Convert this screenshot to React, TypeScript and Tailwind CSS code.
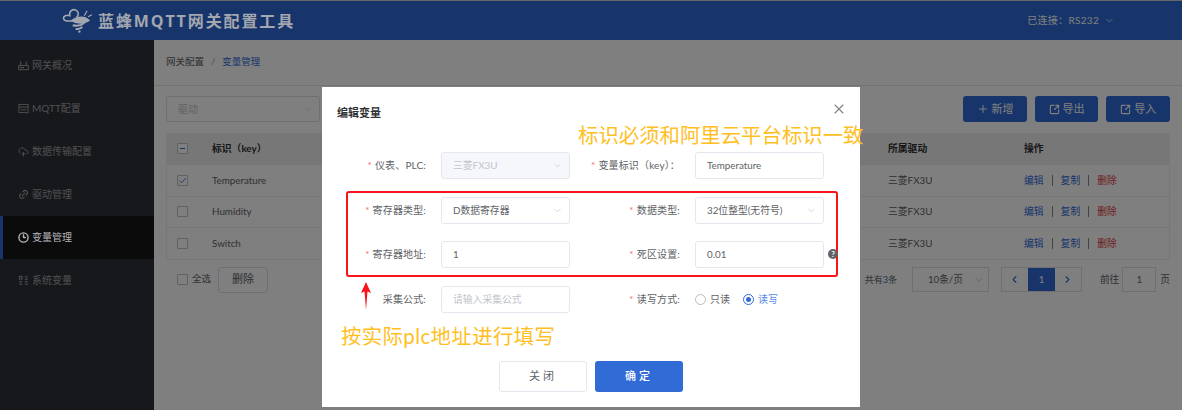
import React from "react";
import { ChevronDown, ChevronLeft, ChevronRight, Plus, X, SquareArrowOutUpRight, Clock3, CloudUpload, Link2 } from "lucide-react";

const rows = ["Temperature", "Humidity", "Switch"];

const navItems = [
  { label: "网关概况", icon: "router" },
  { label: "MQTT配置", icon: "list" },
  { label: "数据传输配置", icon: "cloud" },
  { label: "驱动管理", icon: "link" },
  { label: "变量管理", icon: "clock", active: true },
  { label: "系统变量", icon: "grid" },
];

const NavIcon = ({ name }: { name: string }) => {
  if (name === "cloud") return <CloudUpload className="w-[12px] h-[12px]" />;
  if (name === "link") return <Link2 className="w-[13px] h-[13px] -rotate-45" strokeWidth={2.4} />;
  if (name === "clock") return <Clock3 className="w-[11px] h-[11px]" strokeWidth={3} />;
  if (name === "router")
    return (
      <svg viewBox="0 0 12 12" className="w-[11px] h-[11px]" fill="none" stroke="currentColor" strokeWidth="1.2">
        <rect x="0.8" y="6" width="10.4" height="4.6" rx="0.5" />
        <path d="M3 6V1.5M9 6V1.5M2.5 8.3h4" />
      </svg>
    );
  if (name === "list")
    return (
      <svg viewBox="0 0 12 12" className="w-[11px] h-[11px]" fill="none" stroke="currentColor" strokeWidth="1">
        <rect x="1" y="1.5" width="10" height="9" />
        <path d="M1 4.5h10M3 7.5h6" />
      </svg>
    );
  return (
    <svg viewBox="0 0 12 12" className="w-[11px] h-[11px]" fill="none" stroke="currentColor" strokeWidth="1.1">
      <rect x="1.5" y="1.5" width="3" height="3" />
      <path d="M1.5 7.5h3M1.5 10h3M7.5 2h3M7.5 4.5h3M7.5 7.5h3M7.5 10h3" />
    </svg>
  );
};

const Checkbox = ({ state }: { state?: "minus" | "check" }) => (
  <span className="w-[11px] h-[11px] border border-[#bfc3cb] rounded-[1px] bg-white flex items-center justify-center shrink-0">
    {state === "minus" && <span className="w-[5px] h-px bg-[#306bd6]" />}
    {state === "check" && (
      <svg viewBox="0 0 10 10" className="w-[9px] h-[9px]" fill="none" stroke="#306bd6" strokeWidth="1">
        <path d="M1.5 5 4 7.5 8.5 2.5" />
      </svg>
    )}
  </span>
);

const FormRow = ({ label, value, required = true, right, select, disabled, placeholder }: {
  label: string;
  value?: string;
  required?: boolean;
  right?: boolean;
  select?: boolean;
  disabled?: boolean;
  placeholder?: string;
}) => (
  <div className="flex items-center h-[27px]">
    <label className={`${right ? "w-[89px]" : "w-[104px]"} shrink-0 text-right text-[10px] text-[#606266] tracking-[0.15px] whitespace-nowrap`}>
      {required && <span className="text-[#f56c6c] mr-[3px]">*</span>}
      {label}
    </label>
    <div className={`ml-[15px] w-[129px] h-[27px] border border-[#e4e7ed] rounded-[3px] flex items-center justify-between pl-[11px] pr-[6px] text-[9.8px] ${disabled ? "bg-[#f5f7fa] text-[#c0c4cc]" : "bg-white text-[#606266]"}`}>
      <span className={placeholder ? "text-[#c0c4cc]" : ""}>{value || placeholder}</span>
      {select && <ChevronDown className="w-[11px] h-[11px] text-[#c0c4cc]" strokeWidth={1.5} />}
    </div>
  </div>
);

const ToolButton = ({ label, icon }: { label: string; icon: React.ReactNode }) => (
  <button className="h-[26px] w-[63.6px] bg-[#306bd6] rounded-[3px] flex items-center justify-center gap-[3px] text-white text-[11px]">
    {icon}
    {label}
  </button>
);

export default function App() {
  return (
    <div className="relative w-[1182px] h-[410px] overflow-hidden bg-white flex flex-col font-['Lato','Noto_Sans_CJK_SC',sans-serif] text-[10px]">
      {/* Header */}
      <header className="h-[40px] shrink-0 bg-[#306bd6] border-t border-[#ccc] border-b-[#2a5fc0] flex items-center justify-between pl-[62px] pr-[67px] text-white">
        <div className="relative z-10 flex items-center gap-[5px] text-[#a3a7b0]">
          <svg viewBox="0 0 32 26" className="w-[31px] h-[25px]" fill="none" stroke="currentColor" strokeWidth="1.6">
            <path d="M13 13C8 14 2 14 1.5 11S5 7 8 8C7 3 11 1 14 2s4 5 1 8" />
            <path d="M10 13c5-4 13-5 18 0-4 3-13 4-18 0Z" fill="currentColor" />
            <path d="M11 18c4 1 9 0 12-2.500M14 22c3 0 6-1 7-2.500M17 25l2-1" strokeWidth="2" />
            <path d="M23 8l3-5M27 9l4-2" strokeWidth="1.2" />
          </svg>
          <span className="text-[16px] font-bold tracking-[1.9px] whitespace-nowrap font-['Open_Sans','Noto_Sans_CJK_SC',sans-serif]">蓝蜂MQTT网关配置工具</span>
        </div>
        <div className="flex items-center gap-[5px] text-[10px] tracking-[0.3px]">
          已连接：RS232
          <ChevronDown className="w-[11px] h-[11px]" strokeWidth={1.5} />
        </div>
      </header>

      <div className="flex flex-1 min-h-0">
        {/* Sidebar */}
        <aside className="w-[154px] shrink-0 bg-[#2e3036] pt-[4px]">
          {navItems.map((item) => (
            <div
              key={item.label}
              className={`h-[43px] flex items-center gap-[3px] pl-[15px] border-l-[3px] text-[10px] ${item.active ? "bg-[#161719] border-[#306bd6] text-white" : "border-transparent text-[#a0a1a5]"}`}
            >
              <span className={`w-[11px] flex justify-center ${item.active ? "relative z-10 text-[#b4b5b8]" : ""}`}><NavIcon name={item.icon} /></span>
              <span className={item.active ? "relative z-10 text-[#b4b5b8]" : ""}>{item.label}</span>
            </div>
          ))}
        </aside>

        {/* Main */}
        <main className="flex-1 min-w-0 bg-white">
          <div className="h-[46px] border-b border-[#e4e7ed] flex items-center pl-[12px] text-[9.5px] text-[#606266]">
            网关配置
            <span className="mx-[7px] text-[#a0a3a8]">/</span>
            <span className="text-[#306bd6]">变量管理</span>
          </div>

          <div className="px-[12px] pt-[10px]">
            <div className="flex items-center justify-between h-[26px]">
              <div className="w-[154px] h-[26px] border border-[#dcdfe6] rounded-[3px] flex items-center justify-between pl-[11px] pr-[6px] text-[#c0c4cc]">
                驱动
                <ChevronDown className="w-[11px] h-[11px]" strokeWidth={1.5} />
              </div>
              <div className="flex gap-[8px]">
                <ToolButton label="新增" icon={<Plus className="w-[12px] h-[12px]" />} />
                <ToolButton label="导出" icon={<SquareArrowOutUpRight className="w-[11px] h-[11px]" strokeWidth={2.5} />} />
                <ToolButton label="导入" icon={<SquareArrowOutUpRight className="w-[11px] h-[11px]" strokeWidth={2.5} />} />
              </div>
            </div>

            {/* Table */}
            <div className="mt-[11px] border border-[#ebeef5] border-t-0 text-[9.8px]">
              <div className="h-[31px] bg-[#eeeff1] grid grid-cols-[45px_676px_135px_148px] items-center font-bold text-[#303133]">
                <span className="pl-[10px]"><Checkbox state="minus" /></span>
                <span>标识（key）</span>
                <span>所属驱动</span>
                <span className="pl-px">操作</span>
              </div>
              {rows.map((name, i) => (
                <div key={name} className="h-[31.5px] border-t border-[#ebeef5] grid grid-cols-[45px_676px_135px_148px] items-center text-[#606266]">
                  <span className="pl-[10px]"><Checkbox state={i === 0 ? "check" : undefined} /></span>
                  <span>{name}</span>
                  <span>三菱FX3U</span>
                  <span className="flex items-center pl-px">
                    <span className="text-[#306bd6]">编辑</span>
                    <span className="mx-[8px] w-px h-[11px] bg-[#888]" />
                    <span className="text-[#306bd6]">复制</span>
                    <span className="mx-[8px] w-px h-[11px] bg-[#888]" />
                    <span className="text-[#e04040]">删除</span>
                  </span>
                </div>
              ))}
            </div>

            {/* Footer */}
            <div className="mt-[7px] h-[26px] flex items-center justify-between">
              <div className="flex items-center pl-[11px]">
                <Checkbox />
                <span className="ml-[4px] text-[#606266] text-[9.5px]">全选</span>
                <button className="ml-[7px] w-[50px] h-[26px] border border-[#dcdfe6] rounded-[3px] text-[11px] text-[#606266]">删除</button>
              </div>
              <div className="flex items-center text-[#606266] text-[9.7px]">
                <span className="text-[9px]">共有<span className="text-[#306bd6]">3</span>条</span>
                <div className="ml-[15px] w-[77px] h-[25px] border border-[#dcdfe6] flex items-center justify-between pl-[15px] pr-[4px]">
                  10条/页
                  <ChevronDown className="w-[10px] h-[10px] text-[#c0c4cc]" />
                </div>
                <div className="ml-[12px] w-[81px] h-[25px] border border-[#dcdfe6] flex items-center text-[#306bd6]">
                  <span className="flex-1 flex justify-center"><ChevronLeft className="w-[11px] h-[11px]" strokeWidth={2.5} /></span>
                  <span className="w-[27px] h-full bg-[#306bd6] text-white flex items-center justify-center">1</span>
                  <span className="flex-1 flex justify-center"><ChevronRight className="w-[11px] h-[11px]" strokeWidth={2.5} /></span>
                </div>
                <span className="ml-[18px]">前往</span>
                <div className="ml-[3px] w-[34px] h-[25px] border border-[#dcdfe6] flex items-center justify-center">1</div>
                <span className="ml-[4px]">页</span>
              </div>
            </div>
          </div>
        </main>
      </div>

      {/* Overlay */}
      <div className="absolute inset-0 bg-black/50" />

      {/* Modal */}
      <div className="absolute z-20 left-[322px] top-[87px] w-[538px] h-[320px] bg-white">
        <div className="h-[65px] pl-[15px] pr-[13px] pt-[18px] flex justify-between items-start">
          <span className="text-[11px] font-bold text-[#303133]">编辑变量</span>
          <X className="w-[16px] h-[16px] text-[#808389] -mt-[4px]" strokeWidth={1.6} />
        </div>
        <div className="grid grid-cols-[269px_269px] gap-y-[17.5px]">
          <FormRow label="仪表、PLC:" value="三菱FX3U" select disabled />
          <FormRow label="变量标识（key）：" value="Temperature" right />
          <FormRow label="寄存器类型:" value="D数据寄存器" select />
          <FormRow label="数据类型:" value="32位整型(无符号)" select right />
          <FormRow label="寄存器地址:" value="1" />
          <FormRow label="死区设置:" value="0.01" right />
          <FormRow label="采集公式:" placeholder="请输入采集公式" required={false} />
          <div className="flex items-center h-[27px]">
            <label className="w-[89px] shrink-0 text-right text-[10px] text-[#606266] tracking-[0.15px]">
              <span className="text-[#f56c6c] mr-[3px]">*</span>读写方式:
            </label>
            <div className="ml-[15px] flex items-center text-[10px]">
              <span className="w-[11px] h-[11px] rounded-full border border-[#b8bcc4]" />
              <span className="ml-[4px] text-[#606266]">只读</span>
              <span className="ml-[13px] w-[11px] h-[11px] rounded-full border border-[#306bd6] flex items-center justify-center">
                <span className="w-[5px] h-[5px] rounded-full bg-[#306bd6]" />
              </span>
              <span className="ml-[4px] text-[#5a8be6]">读写</span>
            </div>
          </div>
        </div>
        <div className="mt-[48px] flex justify-center gap-[8px]">
          <button className="w-[88px] h-[31px] border border-[#e4e7ed] rounded-[3px] text-[11px] text-[#606266] tracking-[3px]">关闭</button>
          <button className="w-[88px] h-[31px] bg-[#306bd6] rounded-[3px] text-[11px] text-white font-medium tracking-[3px]">确定</button>
        </div>
      </div>

      {/* Annotations on top of the screenshot */}
      <div className="absolute z-30 left-[346px] top-[191px] w-[492px] h-[86px] border-2 border-[#f8141a] rounded-[3px]" />
      <span className="absolute z-30 left-[828px] top-[249px] w-[10px] h-[10px] rounded-full bg-[#606266] text-white text-[8px] font-bold flex items-center justify-center">?</span>
      <svg viewBox="0 0 12 28" className="absolute z-30 left-[360px] top-[282px] w-[12px] h-[28px]">
        <path d="M6 0 11 11 7.5 9.5 6 28 4.5 9.500 1 11Z" fill="#f8141a" />
      </svg>
      <span className="absolute z-30 left-[578px] top-[121px] text-[20.4px] leading-[28px] text-[#ffc01f] whitespace-nowrap">标识必须和阿里云平台标识一致</span>
      <span className="absolute z-30 left-[341px] top-[322px] text-[20.4px] leading-[28px] tracking-[0.4px] text-[#ffc01f] whitespace-nowrap">按实际plc地址进行填写</span>
    </div>
  );
}
